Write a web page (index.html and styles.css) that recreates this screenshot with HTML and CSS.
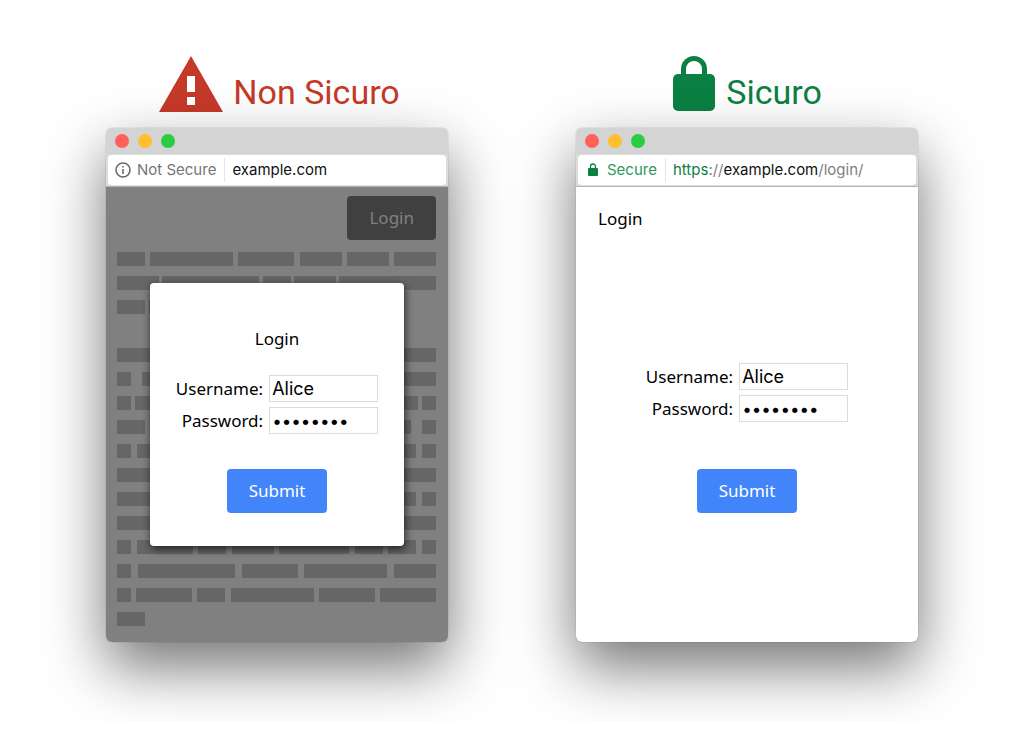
FILE: index.html
```html
<!DOCTYPE html>
<html lang="it">
<head>
<meta charset="utf-8">
<meta name="viewport" content="width=device-width, initial-scale=1">
<title>Non Sicuro / Sicuro</title>
<link rel="stylesheet" href="styles.css">
</head>
<body>
<main class="comparison">
  <section class="example">
    <h2 class="verdict verdict-bad">
      <svg width="64" height="56" viewBox="0 0 64 56" aria-hidden="true"><path fill="currentColor" fill-rule="evenodd" d="M32 0 64 56H0ZM28 20V36H36V20ZM28 41V49H36V41Z"/></svg>
      <span>Non Sicuro</span>
    </h2>
    <div class="window">
      <div class="titlebar"><span class="light red"></span><span class="light yellow"></span><span class="light green"></span></div>
      <div class="toolbar">
        <div class="address">
          <svg class="info" width="16" height="16" viewBox="0 0 16 16" aria-hidden="true"><circle cx="8" cy="8" r="7" fill="none" stroke="currentColor" stroke-width="1.6"/><path fill="currentColor" d="M7.2 4H8.8V5.6H7.2ZM7.2 7H8.8V12H7.2Z"/></svg>
          <span class="status">Not Secure</span>
          <span class="url"><span class="host">example.com</span></span>
        </div>
      </div>
      <div class="page dimmed">
        <button class="login" type="button">Login</button>
        <div class="skeleton" aria-hidden="true">
          <div class="line"><i style="--w:28"></i><i style="--w:83"></i><i style="--w:56"></i><i style="--w:42"></i><i style="--w:42"></i><i style="--w:42"></i></div>
          <div class="line"><i style="--w:42"></i><i style="--w:97"></i><i style="--w:28"></i><i style="--w:42"></i><i style="--w:97"></i></div>
          <div class="line short"><i style="--w:28"></i><i style="--w:70"></i></div>
          <div class="line"></div>
          <div class="line"><i style="--w:97"></i><i style="--w:111"></i><i style="--w:97"></i></div>
          <div class="line"><i style="--w:14"></i><i style="--w:134"></i><i style="--w:149"></i></div>
          <div class="line"><i style="--w:14"></i><i style="--w:139"></i><i style="--w:139"></i><i style="--w:14"></i></div>
          <div class="line"><i style="--w:28"></i><i style="--w:70"></i><i style="--w:174"></i><i style="--w:14"></i></div>
          <div class="line"><i style="--w:14"></i><i style="--w:136"></i><i style="--w:136"></i><i style="--w:14"></i></div>
          <div class="line"><i style="--w:97"></i><i style="--w:111"></i><i style="--w:97"></i></div>
          <div class="line"><i style="--w:97"></i><i style="--w:196"></i><i style="--w:14"></i></div>
          <div class="line"><i style="--w:97"></i><i style="--w:111"></i><i style="--w:97"></i></div>
          <div class="line"><i style="--w:14"></i><i style="--w:56"></i><i style="--w:28"></i><i style="--w:42"></i><i style="--w:70"></i><i style="--w:28"></i><i style="--w:28"></i><i style="--w:14"></i></div>
          <div class="line"><i style="--w:14"></i><i style="--w:97"></i><i style="--w:56"></i><i style="--w:83"></i><i style="--w:42"></i></div>
          <div class="line"><i style="--w:14"></i><i style="--w:56"></i><i style="--w:28"></i><i style="--w:83"></i><i style="--w:56"></i><i style="--w:56"></i></div>
          <div class="line short"><i style="--w:28"></i></div>
        </div>
        <div class="overlay">
          <form class="dialog">
            <h3 class="heading">Login</h3>
            <div class="fields">
              <label for="user-a">Username:</label><input id="user-a" type="text" value="Alice">
              <label for="pass-a">Password:</label><input id="pass-a" type="password" value="password">
            </div>
            <button class="submit" type="button">Submit</button>
          </form>
        </div>
      </div>
    </div>
  </section>

  <section class="example">
    <h2 class="verdict verdict-good">
      <svg width="44" height="56" viewBox="0 0 44 56" aria-hidden="true"><rect x="1" y="18" width="42" height="37" rx="5" fill="currentColor"/><path d="M11.500 20V13a10.500 10.500 0 0 1 21 0V20" fill="none" stroke="currentColor" stroke-width="5"/></svg>
      <span>Sicuro</span>
    </h2>
    <div class="window">
      <div class="titlebar"><span class="light red"></span><span class="light yellow"></span><span class="light green"></span></div>
      <div class="toolbar">
        <div class="address secure">
          <svg class="info" width="16" height="16" viewBox="0 0 16 16" aria-hidden="true"><rect x="3" y="6" width="10" height="8" rx="1" fill="currentColor"/><path d="M5.500 7V4.500a2.500 2.500 0 0 1 5 0V7" fill="none" stroke="currentColor" stroke-width="1.300"/></svg>
          <span class="status">Secure</span>
          <span class="url"><span class="scheme">https</span>://<span class="host">example.com</span>/login/</span>
        </div>
      </div>
      <div class="page">
        <h3 class="heading corner">Login</h3>
        <form class="plain-form">
          <div class="fields">
            <label for="user-b">Username:</label><input id="user-b" type="text" value="Alice">
            <label for="pass-b">Password:</label><input id="pass-b" type="password" value="password">
          </div>
          <button class="submit" type="button">Submit</button>
        </form>
      </div>
    </div>
  </section>
</main>
</body>
</html>
```
FILE: styles.css
```css
* { box-sizing: border-box; }
body {
  margin: 0;
  background: #fff;
  color: #000;
  font: 17px/24px "Noto Sans", sans-serif;
}
.comparison {
  display: grid;
  grid-template-columns: repeat(2, minmax(0, 342px));
  justify-content: center;
  gap: 128px;
  padding: 56px 16px 80px;
}
.example { display: flex; flex-direction: column; }
.verdict {
  display: flex;
  align-items: center;
  justify-content: center;
  gap: 10px;
  margin: 0 0 16px;
  font: 400 34px/40px Roboto, sans-serif;
}
.verdict svg { flex: none; }
.verdict span { padding-top: 16px; }
.verdict-bad { color: #c53929; padding-left: 5px; }
.verdict-good { color: #0b8043; }
.window {
  flex: 1;
  display: flex;
  flex-direction: column;
  border-radius: 6px;
  background: #fff;
  box-shadow: 0 0 1px rgba(0, 0, 0, .5), 0 25px 60px rgba(0, 0, 0, .55);
}
.titlebar {
  display: flex;
  align-items: center;
  gap: 9px;
  height: 26px;
  padding: 0 9px;
  border-radius: 6px 6px 0 0;
  background: #d4d4d4;
}
.light { width: 14px; height: 14px; border-radius: 50%; }
.red { background: #ff6059; }
.yellow { background: #ffbf2f; }
.green { background: #29cc42; }
.toolbar {
  padding: 1px 2px;
  background: #dcdcdc;
  border-bottom: 1px solid #b4b4b4;
}
.address {
  display: flex;
  align-items: center;
  height: 30px;
  padding: 0 7px;
  border-radius: 4px;
  background: #fff;
  color: #6a6a6a;
  font: 15px/24px Inter, sans-serif;
  white-space: nowrap;
}
.info { flex: none; margin-right: 6px; }
.status {
  padding-right: 8px;
  color: #757575;
}
.url {
  padding-left: 7px;
  border-left: 1px solid #e4e4e4;
  color: #808080;
}
.host { color: #111; }
.secure { color: #0b8043; }
.secure .status { color: #2f9760; }
.scheme { color: #0b8043; }
.page {
  position: relative;
  display: flex;
  flex-direction: column;
  min-height: 454px;
  border-radius: 0 0 6px 6px;
}
.dimmed { padding: 9px 12px 16px 11px; background: #808080; }
.login, .submit {
  height: 44px;
  padding: 0 22px;
  border: 0;
  border-radius: 4px;
  font: inherit;
}
.login { align-self: flex-end; background: #404040; color: #808080; }
.submit { background: #4285fa; color: #fff; }
.skeleton {
  display: flex;
  flex-direction: column;
  gap: 10px;
  padding-top: 12px;
}
.line { display: flex; justify-content: space-between; height: 14px; }
.line i { width: calc(var(--w) / 319 * 100%); background: #666; }
.short { justify-content: flex-start; gap: 4px; }
.overlay {
  position: absolute;
  inset: 0;
  display: flex;
  align-items: center;
  justify-content: center;
}
.dialog {
  display: flex;
  flex-direction: column;
  align-items: center;
  padding: 44px 26px 33px;
  border-radius: 4px;
  background: #fff;
  box-shadow: 1px 3px 8px rgba(0, 0, 0, .7);
}
.heading { margin: 0; font: inherit; }
.dialog .heading { margin-bottom: 24px; }
.corner { padding: 20px 22px 0; }
.fields {
  display: grid;
  grid-template-columns: auto 109px;
  align-items: center;
  gap: 5px 6px;
  margin-bottom: 35px;
}
.fields label { text-align: right; }
.fields input {
  width: 100%;
  height: 27px;
  padding: 0 2px;
  border: 1px solid #dcdcdc;
  background: #fff;
  color: #000;
  font: 18px/24px Inter, sans-serif;
}
.fields input[type="password"] { font-size: 17px; }
.plain-form {
  display: flex;
  flex-direction: column;
  align-items: center;
  padding-top: 132px;
}
.plain-form .fields { margin-bottom: 47px; }
```
